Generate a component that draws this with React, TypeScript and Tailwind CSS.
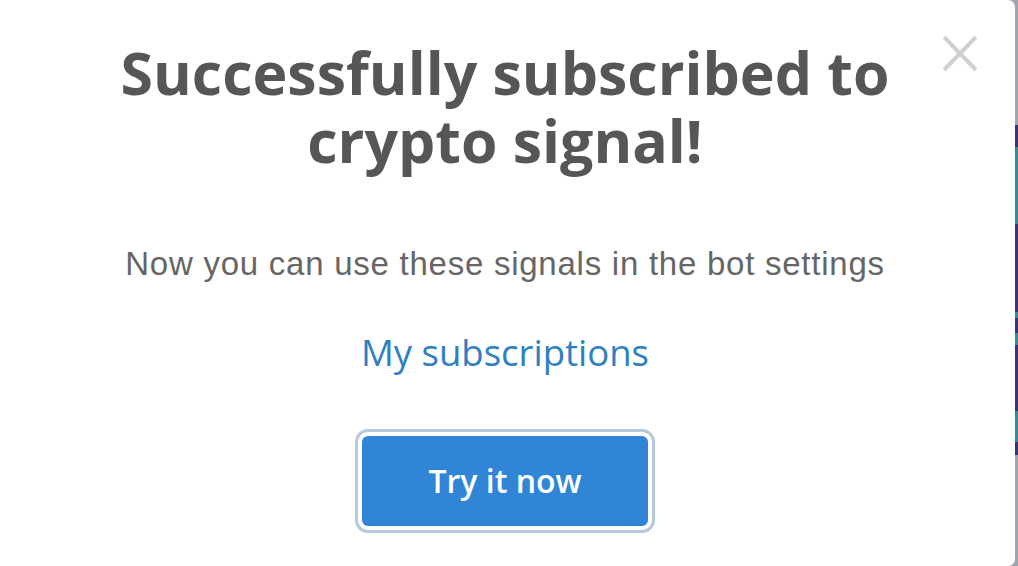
import React from "react";

export default function App() {
  return (
    <div className="w-[1018px] h-[566px] flex bg-[#9ea6b0] overflow-hidden">
      <div className="relative flex-1 h-full bg-white rounded-r-[7px] flex flex-col items-center pr-[5px]">
        <button className="absolute right-[37px] top-[35px] w-[36px] h-[37px]" aria-label="close">
          <svg viewBox="0 0 36 37" width="36" height="37">
            <path d="M2 2 L34 35 M34 2 L2 35" stroke="#d0d0d0" strokeWidth="4" strokeLinecap="butt" />
          </svg>
        </button>
        <h1 className="mt-[38px] text-center text-[59px] leading-[68px] font-bold text-[#565656] font-['Open_Sans',sans-serif]">
          Successfully subscribed to
          <br />
          crypto signal!
        </h1>
        <p className="mt-[70px] text-[33px] leading-[40px] tracking-[0.75px] font-light text-[#666666] font-['Liberation_Sans',Arial,sans-serif]">
          Now you can use these signals in the bot settings
        </p>
        <a
          href="#"
          className="mt-[48px] text-[36.5px] leading-[40px] text-[#2f7fc1] font-['Open_Sans',sans-serif]"
        >
          My subscriptions
        </a>
        <button className="mt-[64px] w-[286px] h-[90px] rounded-[6px] bg-[#3085d6] text-white text-[32px] font-semibold shadow-[0_0_0_4px_#ffffff,0_0_0_7px_#b6c9dc] font-['Open_Sans',sans-serif]">
          Try it now
        </button>
      </div>
      <div className="w-[3px] flex flex-col">
        <div className="h-[125px] bg-[#9ea6b0]" />
        <div className="h-[22px] bg-[#3b2f8c]" />
        <div className="h-[77px] bg-[#2a8f98]" />
        <div className="h-[88px] bg-[#3b2f8c]" />
        <div className="h-[6px] bg-[#2a8f98]" />
        <div className="h-[15px] bg-[#3b2f8c]" />
        <div className="h-[12px] bg-[#2a8f98]" />
        <div className="h-[66px] bg-[#3b2f8c]" />
        <div className="h-[31px] bg-[#2a8f98]" />
        <div className="h-[13px] bg-[#3b2f8c]" />
        <div className="flex-1 bg-[#9ea6b0]" />
      </div>
    </div>
  );
}
